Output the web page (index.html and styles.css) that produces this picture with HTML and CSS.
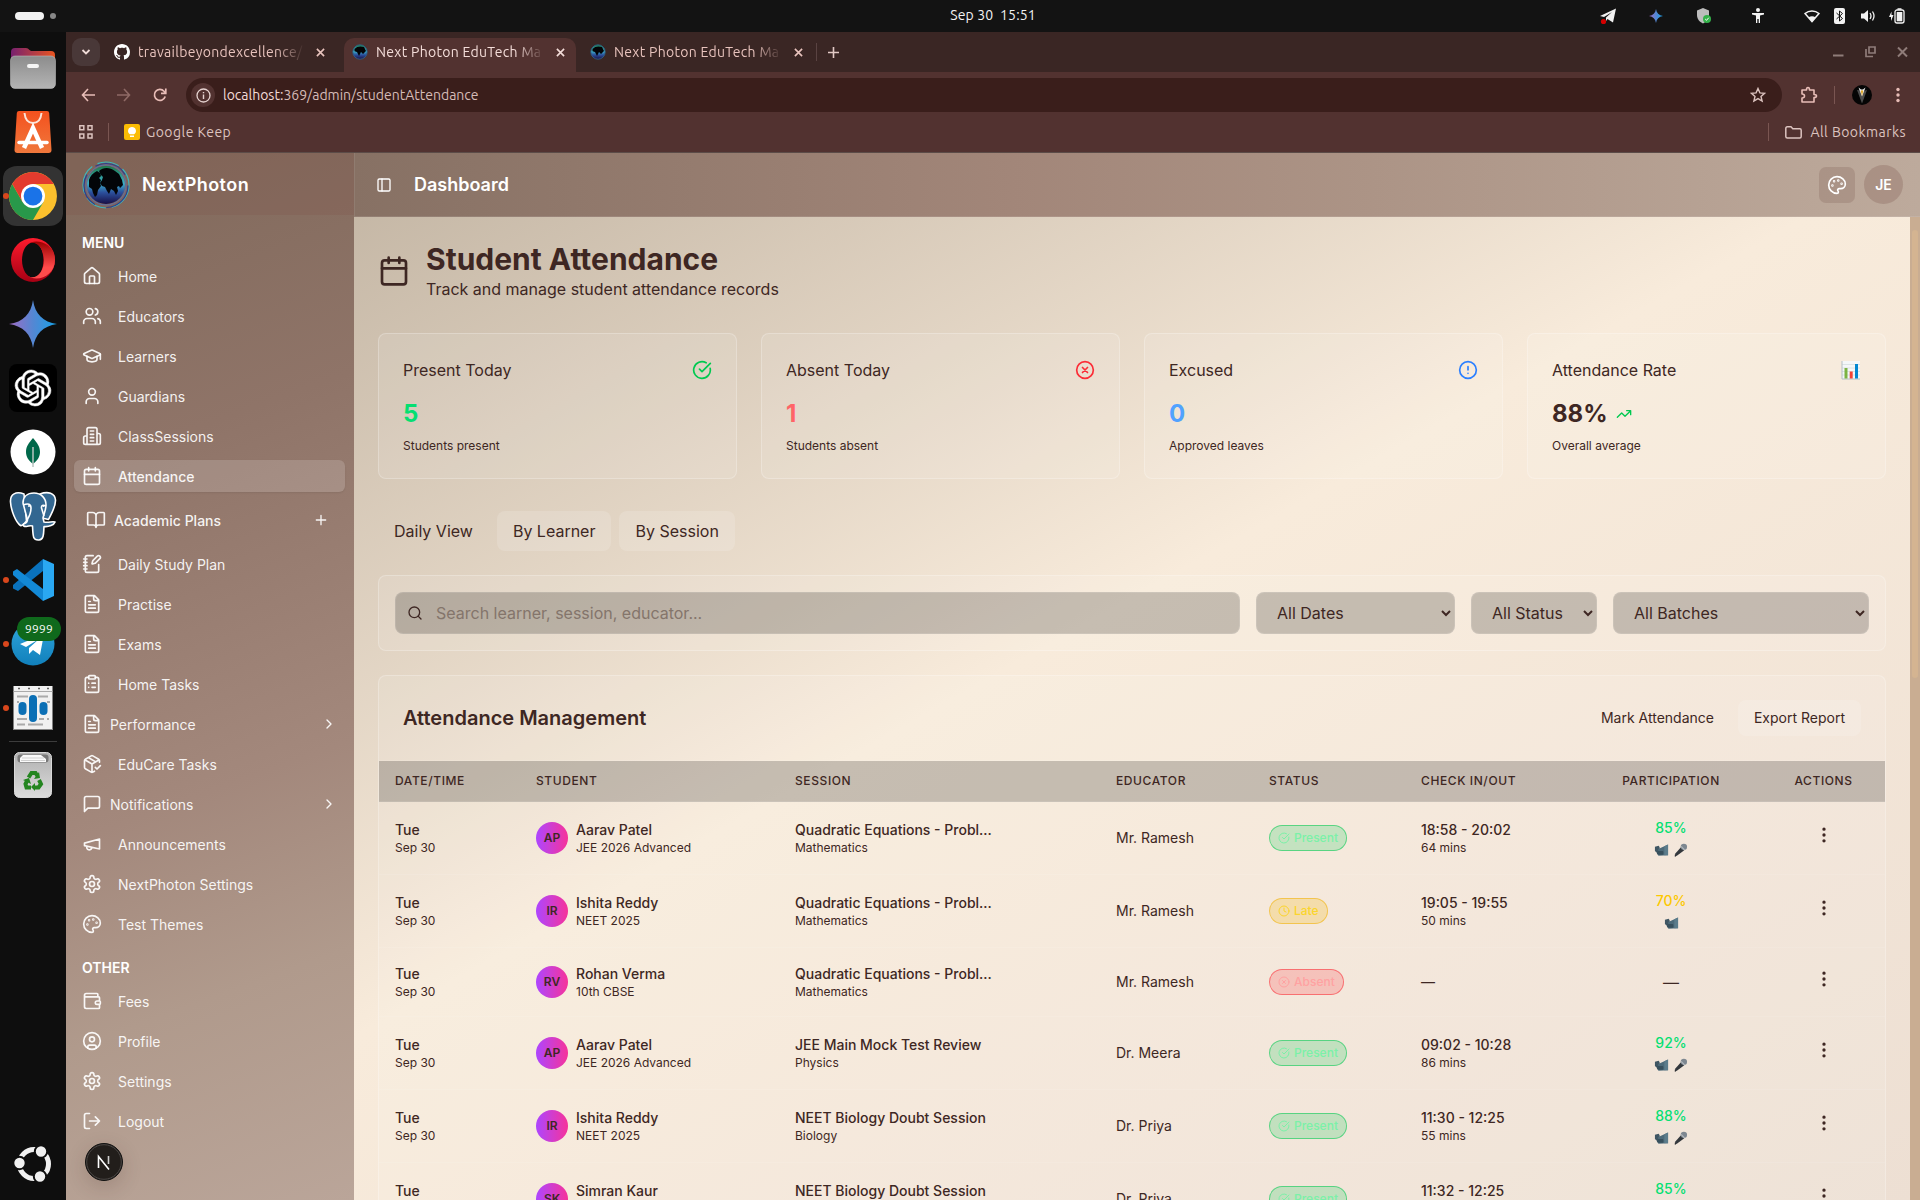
FILE: index.html
```html
<!DOCTYPE html>
<html lang="en">
<head>
<meta charset="utf-8">
<title>Next Photon EduTech</title>
<link rel="stylesheet" href="styles.css">
</head>
<body>
<svg class="defs" aria-hidden="true">
  <defs>
    <linearGradient id="gem" x1="0" x2="1"><stop offset="0" stop-color="#a06bc4"/><stop offset=".5" stop-color="#5487d3"/><stop offset="1" stop-color="#16a2e8"/></linearGradient>
    <linearGradient id="globeFill" x1="0" x2="0" y1="0" y2="1"><stop offset="0" stop-color="#1d7a4c"/><stop offset=".45" stop-color="#3cb0c8"/><stop offset=".7" stop-color="#2b4f9c"/><stop offset="1" stop-color="#190f45"/></linearGradient>
    <linearGradient id="operaA" x1="0" x2="0" y1="0" y2="1"><stop offset="0" stop-color="#ff1b2d"/><stop offset="1" stop-color="#a70014"/></linearGradient>
    <linearGradient id="operaB" x1="0" x2="0" y1="0" y2="1"><stop offset="0" stop-color="#9c0000"/><stop offset=".7" stop-color="#ff4b4b"/></linearGradient>
    <linearGradient id="folderBack" x1="0" x2="1"><stop offset="0" stop-color="#77216f"/><stop offset="1" stop-color="#e95420"/></linearGradient>
    <linearGradient id="greyFade" x1="0" x2="0" y1="0" y2="1"><stop offset="0" stop-color="#8c8c8c"/><stop offset="1" stop-color="#b4b4b4"/></linearGradient>
    <linearGradient id="trashFade" x1="0" x2="0" y1="0" y2="1"><stop offset="0" stop-color="#b0b0b0"/><stop offset="1" stop-color="#dcdcdc"/></linearGradient>
    <linearGradient id="tgFade" x1="0" x2="0" y1="0" y2="1"><stop offset="0" stop-color="#2fa5dd"/><stop offset="1" stop-color="#1180bb"/></linearGradient>
    <linearGradient id="storeFade" x1="0" x2="0" y1="0" y2="1"><stop offset="0" stop-color="#f4511e"/><stop offset="1" stop-color="#f0783c"/></linearGradient>
  </defs>
  <symbol id="i-home" viewBox="0 0 24 24"><path d="M15 21v-8a1 1 0 0 0-1-1h-4a1 1 0 0 0-1 1v8"/><path d="M3 10a2 2 0 0 1 .709-1.528l7-5.999a2 2 0 0 1 2.582 0l7 5.999A2 2 0 0 1 21 10v9a2 2 0 0 1-2 2H5a2 2 0 0 1-2-2z"/></symbol>
  <symbol id="i-users" viewBox="0 0 24 24"><path d="M16 21v-2a4 4 0 0 0-4-4H6a4 4 0 0 0-4 4v2"/><circle cx="9" cy="7" r="4"/><path d="M22 21v-2a4 4 0 0 0-3-3.87M16 3.13a4 4 0 0 1 0 7.75"/></symbol>
  <symbol id="i-cap" viewBox="0 0 24 24"><path d="M21.42 10.922a1 1 0 0 0-.019-1.838L12.83 5.18a2 2 0 0 0-1.66 0L2.6 9.08a1 1 0 0 0 0 1.832l8.57 3.908a2 2 0 0 0 1.66 0z"/><path d="M22 10v6M6 12.5V16a6 3 0 0 0 12 0v-3.5"/></symbol>
  <symbol id="i-user" viewBox="0 0 24 24"><path d="M19 21v-2a4 4 0 0 0-4-4H9a4 4 0 0 0-4 4v2"/><circle cx="12" cy="7" r="4"/></symbol>
  <symbol id="i-building" viewBox="0 0 24 24"><path d="M6 22V4a2 2 0 0 1 2-2h8a2 2 0 0 1 2 2v18ZM6 12H4a2 2 0 0 0-2 2v6a2 2 0 0 0 2 2h2M18 9h2a2 2 0 0 1 2 2v9a2 2 0 0 1-2 2h-2M10 6h4M10 10h4M10 14h4M10 18h4"/></symbol>
  <symbol id="i-calendar" viewBox="0 0 24 24"><path d="M8 2v4M16 2v4M3 10h18"/><rect x="3" y="4" width="18" height="18" rx="2"/></symbol>
  <symbol id="i-book" viewBox="0 0 24 24"><path d="M12 7v14M3 18a1 1 0 0 1-1-1V4a1 1 0 0 1 1-1h5a4 4 0 0 1 4 4 4 4 0 0 1 4-4h5a1 1 0 0 1 1 1v13a1 1 0 0 1-1 1h-6a3 3 0 0 0-3 3 3 3 0 0 0-3-3z"/></symbol>
  <symbol id="i-notebook" viewBox="0 0 24 24"><path d="M13.4 2H6a2 2 0 0 0-2 2v16a2 2 0 0 0 2 2h12a2 2 0 0 0 2-2v-7.4M2 6h4M2 10h4M2 14h4M2 18h4M21.378 5.626a1 1 0 1 0-3.004-3.004l-5.01 5.012a2 2 0 0 0-.506.854l-.837 2.87a.5.5 0 0 0 .62.62l2.87-.837a2 2 0 0 0 .854-.506z"/></symbol>
  <symbol id="i-file" viewBox="0 0 24 24"><path d="M15 2H6a2 2 0 0 0-2 2v16a2 2 0 0 0 2 2h12a2 2 0 0 0 2-2V7ZM14 2v4a2 2 0 0 0 2 2h4M10 9H8M16 13H8M16 17H8"/></symbol>
  <symbol id="i-clipboard" viewBox="0 0 24 24"><rect x="8" y="2" width="8" height="4" rx="1"/><path d="M16 4h2a2 2 0 0 1 2 2v14a2 2 0 0 1-2 2H6a2 2 0 0 1-2-2V6a2 2 0 0 1 2-2h2M12 11h4M12 16h4M8 11h.01M8 16h.01"/></symbol>
  <symbol id="i-package" viewBox="0 0 24 24"><path d="m16 16 2 2 4-4M21 10V8a2 2 0 0 0-1-1.73l-7-4a2 2 0 0 0-2 0l-7 4A2 2 0 0 0 3 8v8a2 2 0 0 0 1 1.73l7 4a2 2 0 0 0 2 0l2-1.14M7.5 4.27l9 5.15M3.29 7 12 12l8.71-5M12 22V12"/></symbol>
  <symbol id="i-message" viewBox="0 0 24 24"><path d="M21 15a2 2 0 0 1-2 2H7l-4 4V5a2 2 0 0 1 2-2h14a2 2 0 0 1 2 2z"/></symbol>
  <symbol id="i-megaphone" viewBox="0 0 24 24"><path d="m3 11 18-5v12L3 14v-3zM11.6 16.8a3 3 0 1 1-5.8-1.6"/></symbol>
  <symbol id="i-settings" viewBox="0 0 24 24"><path d="M12.22 2h-.44a2 2 0 0 0-2 2v.18a2 2 0 0 1-1 1.73l-.43.25a2 2 0 0 1-2 0l-.15-.08a2 2 0 0 0-2.73.73l-.22.38a2 2 0 0 0 .73 2.73l.15.1a2 2 0 0 1 1 1.72v.51a2 2 0 0 1-1 1.74l-.15.09a2 2 0 0 0-.73 2.73l.22.38a2 2 0 0 0 2.73.73l.15-.08a2 2 0 0 1 2 0l.43.25a2 2 0 0 1 1 1.73V20a2 2 0 0 0 2 2h.44a2 2 0 0 0 2-2v-.18a2 2 0 0 1 1-1.73l.43-.25a2 2 0 0 1 2 0l.15.08a2 2 0 0 0 2.73-.73l.22-.39a2 2 0 0 0-.73-2.73l-.15-.08a2 2 0 0 1-1-1.74v-.5a2 2 0 0 1 1-1.74l.15-.09a2 2 0 0 0 .73-2.73l-.22-.38a2 2 0 0 0-2.73-.73l-.15.08a2 2 0 0 1-2 0l-.43-.25a2 2 0 0 1-1-1.73V4a2 2 0 0 0-2-2z"/><circle cx="12" cy="12" r="3"/></symbol>
  <symbol id="i-palette" viewBox="0 0 24 24"><circle cx="13.5" cy="6.5" r=".5"/><circle cx="17.5" cy="10.5" r=".5"/><circle cx="8.5" cy="7.5" r=".5"/><circle cx="6.5" cy="12.5" r=".5"/><path d="M12 2C6.5 2 2 6.5 2 12s4.5 10 10 10c.926 0 1.648-.746 1.648-1.688 0-.437-.18-.835-.437-1.125-.29-.289-.438-.652-.438-1.125a1.64 1.64 0 0 1 1.668-1.668h1.996c3.051 0 5.555-2.503 5.555-5.554C21.965 6.012 17.461 2 12 2z"/></symbol>
  <symbol id="i-wallet" viewBox="0 0 24 24"><path d="M19 7V4a1 1 0 0 0-1-1H5a2 2 0 0 0 0 4h15a1 1 0 0 1 1 1v4h-3a2 2 0 0 0 0 4h3a1 1 0 0 0 1-1v-2a1 1 0 0 0-1-1M3 5v14a2 2 0 0 0 2 2h15a1 1 0 0 0 1-1v-4"/></symbol>
  <symbol id="i-profile" viewBox="0 0 24 24"><circle cx="12" cy="12" r="10"/><circle cx="12" cy="10" r="3"/><path d="M7 20.662V19a2 2 0 0 1 2-2h6a2 2 0 0 1 2 2v1.662"/></symbol>
  <symbol id="i-logout" viewBox="0 0 24 24"><path d="M9 21H5a2 2 0 0 1-2-2V5a2 2 0 0 1 2-2h4M16 17l5-5-5-5M21 12H9"/></symbol>
  <symbol id="i-chevron" viewBox="0 0 24 24"><path d="m9 18 6-6-6-6"/></symbol>
  <symbol id="i-plus" viewBox="0 0 24 24"><path d="M5 12h14M12 5v14"/></symbol>
  <symbol id="i-panel" viewBox="0 0 24 24"><rect x="3" y="3" width="18" height="18" rx="2"/><path d="M9 3v18"/></symbol>
  <symbol id="i-check" viewBox="0 0 24 24"><path d="M21.801 10A10 10 0 1 1 17 3.335M9 11l3 3L22 4"/></symbol>
  <symbol id="i-x" viewBox="0 0 24 24"><circle cx="12" cy="12" r="10"/><path d="m15 9-6 6M9 9l6 6"/></symbol>
  <symbol id="i-alert" viewBox="0 0 24 24"><circle cx="12" cy="12" r="10"/><path d="M12 8v4M12 16h.01"/></symbol>
  <symbol id="i-clock" viewBox="0 0 24 24"><circle cx="12" cy="12" r="10"/><path d="M12 6v6l4 2"/></symbol>
  <symbol id="i-trend" viewBox="0 0 24 24"><path d="m22 7-8.5 8.5-5-5L2 17M16 7h6v6"/></symbol>
  <symbol id="i-search" viewBox="0 0 24 24"><circle cx="11" cy="11" r="8"/><path d="m21 21-4.3-4.3"/></symbol>
  <symbol id="i-dots" viewBox="0 0 24 24"><circle cx="12" cy="12" r="1"/><circle cx="12" cy="5" r="1"/><circle cx="12" cy="19" r="1"/></symbol>
  <symbol id="close" viewBox="0 0 10 10"><path d="M1 1l8 8M9 1l-8 8" fill="none" stroke="currentColor" stroke-width="1.8"/></symbol>
  <symbol id="star4" viewBox="0 0 48 48"><path d="M24 0C26 14 34 22 48 24 34 26 26 34 24 48 22 34 14 26 0 24 14 22 22 14 24 0Z" fill="url(#gem)"/></symbol>
  <symbol id="globe" viewBox="0 0 50 50">
    <circle cx="25" cy="25" r="23" fill="none" stroke="#3fb6b9" stroke-width="1.2" stroke-dasharray="30 6 22 5"/>
    <circle cx="25" cy="25.5" r="22" fill="none" stroke="#2b3f8f" stroke-width="1.2" stroke-dasharray="34 12"/>
    <circle cx="25" cy="25" r="19" fill="url(#globeFill)"/>
    <path d="M8 20c1-4 4-7 8-9l3 2 1 3-2 2 2 2-1 3 1 3-3 4-1 5-2 2-2-4-1-4-3-2zM18 11c4-4 11-4 16 0l4 3 3 6 1 5-3 3-1-2-2 1 1 4-2 4-2-4-3-2-2 5-2-3-2-4-3-1-2-3 2-3 1-3-2-2z" fill="#030508"/>
    <circle cx="25" cy="25" r="20" fill="none" stroke="#5d6fa8" stroke-width="1"/>
  </symbol>
  <symbol id="fav" viewBox="0 0 16 16"><circle cx="8" cy="8" r="7.2" fill="url(#globeFill)" stroke="#2e5f86" stroke-width=".9"/><path d="M2.5 5C5 2 9 2 12 3l2 4-3 3-2-2-2 4-2-4-2.500-.8z" fill="#020407"/></symbol>
  <symbol id="cam" viewBox="0 0 16 16"><path d="M1 4.500 5 3.500l1 1.500v2.500l4-1V11c0 1-.5 1.800-1.500 1.800H4.500C3.600 12.800 3 12 3 11l-2-2z" fill="#3f5663"/><path d="M4.500 7 15 2v11.500L4.500 14z" fill="#4c6a79"/><path d="M11 3.900 15 2v11.500l-4 .2z" fill="#5b7c8b"/><rect x="3.500" y="9" width="6.500" height="4" rx="1" fill="#37505d"/></symbol>
  <symbol id="mic" viewBox="0 0 16 16"><path d="M8.500 5 12 8.200 3.800 14.500 1.800 12.600z" fill="#33383d"/><path d="M2 14.800 3.200 13.600" stroke="#23272b" stroke-width="1.500"/><circle cx="11.600" cy="4.600" r="3.400" fill="#7d8790"/><path d="M8.700 4.200 12.300 8" stroke="#b3b9be" stroke-width="1.200"/></symbol>
</svg>

<div class="topbar">
  <div class="activities"><i class="pill"></i><i class="dot"></i></div>
  <div class="clock">Sep 30&nbsp; 15:51</div>
  <div class="tray">
    <svg width="18" height="18" viewBox="0 0 18 18"><path d="M1 9 17 1.500 14 15.500 8.500 12 7 14V10.500L13 5 5 10z" fill="#f2f2f2"/><circle cx="4.500" cy="14.500" r="2.600" fill="#d40000"/></svg>
    <svg class="t2" width="14" height="14"><use href="#star4"/></svg>
    <svg class="t3" width="18" height="18" viewBox="0 0 18 18"><path d="M8 1 14 3.500V8c0 4-2.500 7-6 8.500C4.500 15 2 12 2 8V3.500z" fill="#bdbdbd"/><circle cx="12" cy="12" r="4" fill="#34b24a"/><path d="m10.200 12 1.300 1.300 2.300-2.600" stroke="#fff" fill="none"/></svg>
    <svg class="t4" width="14" height="16" viewBox="0 0 14 16"><circle cx="7" cy="2" r="2" fill="#f2f2f2"/><path d="M1 5h12v1.600L9 7.500V15H7.700v-4H6.300v4H5V7.500L1 6.600z" fill="#f2f2f2"/></svg>
    <svg class="t5" width="16" height="14" viewBox="0 0 16 14"><path d="M1 4.500C5 1 11 1 15 4.500L8 12.500z" fill="none" stroke="#f2f2f2" stroke-width="1.500"/><path d="M4.500 8.200q3.500-2 7 0L8 13z" fill="#f2f2f2"/></svg>
    <svg class="t6" width="11" height="16" viewBox="0 0 11 16"><rect width="11" height="16" rx="2" fill="#f2f2f2"/><path d="m2.500 5 6 5.500L5.500 13V3l3 2.500-6 5.500" fill="none" stroke="#131313"/></svg>
    <svg class="t7" width="16" height="16" viewBox="0 0 16 16"><path d="M1 5.500h3L8 2v12L4 10.500H1z" fill="#f2f2f2"/><path d="M10 5q2 3 0 6M12.500 3.500q3 4.500 0 9" fill="none" stroke="#f2f2f2" stroke-width="1.300"/></svg>
    <svg class="t8" width="17" height="16" viewBox="0 0 17 16"><path d="M3.500 3.500 1 9h2v4l2.500-6H3.500z" fill="#f2f2f2"/><rect x="7" y="2" width="9" height="13" rx="2" fill="none" stroke="#f2f2f2" stroke-width="1.300"/><rect x="8.700" y="4" width="5.600" height="9.300" fill="#f2f2f2"/><path d="M9.500 1h4" stroke="#f2f2f2" stroke-width="1.500"/></svg>
  </div>
</div>

<div class="desktop">
  <div class="dock">
    <div class="app"><svg width="46" height="42" viewBox="0 0 46 42"><path d="M1 5q0-4 4-4h11q2 0 3.500 2L21 4h20q4 0 4 4v12H1z" fill="url(#folderBack)"/><rect x=".5" y="9" width="45" height="32.500" rx="4.500" fill="url(#greyFade)" stroke="#c8c8c8" stroke-opacity=".5"/><rect x="17" y="17" width="12" height="4" rx="2" fill="#f5f5f5"/></svg></div>
    <div class="app"><svg width="38" height="44" viewBox="0 0 38 44"><path d="M5 1h28q2 0 2.200 2L37.500 40q0 3-3 3h-31q-3 0-3-3L2.800 3Q3 1 5 1z" fill="url(#storeFade)"/><path d="M10.500 3q1 10 8.500 10T27.500 3" fill="none" stroke="#fbe4da" stroke-width="2"/><path d="M10 38 19 18l9 20" fill="none" stroke="#fff" stroke-width="4.500"/><path d="M5 32.500h28" stroke="#fff" stroke-width="3.500" stroke-linecap="round"/></svg></div>
    <div class="app run sel"><svg width="50" height="50" viewBox="0 0 48 48"><circle cx="24" cy="24" r="23" fill="#fbc02d"/><path d="M24 24 4.100 12.500A23 23 0 0 1 43.900 12.500H24z" fill="#e33b2e"/><path d="M4.100 12.500A23 23 0 0 0 24 47L34 29.700 24 24 14 29.700z" fill="#28984a"/><path d="M4.100 12.500 14 29.700 24 13z" fill="#e33b2e"/><circle cx="24" cy="24" r="11.500" fill="#fff"/><circle cx="24" cy="24" r="9" fill="#1a73e8"/></svg></div>
    <div class="app"><svg width="44" height="44" viewBox="0 0 44 44"><path fill-rule="evenodd" d="M22 0a22 22 0 1 0 0 44 22 22 0 0 0 0-44zm0 4.500c6 0 10.500 7.800 10.500 17.500S28 39.500 22 39.500 11 31.700 11 22 16 4.500 22 4.500z" fill="url(#operaA)"/><path d="M16 6.500C26 -1 44 6 44 22S26 45 16 37.500C24 43 33 35 33 22S24 1 16 6.500z" fill="url(#operaB)"/></svg></div>
    <div class="app"><svg width="48" height="48"><use href="#star4"/></svg></div>
    <div class="app"><svg width="48" height="48" viewBox="0 0 48 48"><rect width="48" height="48" rx="8" fill="#000"/><path transform="translate(6 6) scale(1.5)" fill="#fff" stroke="#fff" stroke-width=".35" d="M22.2819 9.8211a5.9847 5.9847 0 0 0-.5157-4.9108 6.0462 6.0462 0 0 0-6.5098-2.9A6.0651 6.0651 0 0 0 4.9807 4.1818a5.9847 5.9847 0 0 0-3.9977 2.9 6.0462 6.0462 0 0 0 .7427 7.0966 5.98 5.98 0 0 0 .511 4.9107 6.051 6.051 0 0 0 6.5146 2.9001A5.9847 5.9847 0 0 0 13.2599 24a6.0557 6.0557 0 0 0 5.7718-4.2058 5.9894 5.9894 0 0 0 3.9977-2.9001 6.0557 6.0557 0 0 0-.7475-7.0729zm-9.022 12.6081a4.4755 4.4755 0 0 1-2.8764-1.0408l.1419-.0804 4.7783-2.7582a.7948.7948 0 0 0 .3927-.6813v-6.7369l2.02 1.1686a.071.071 0 0 1 .038.052v5.5826a4.504 4.504 0 0 1-4.4945 4.4944zm-9.6607-4.1254a4.4708 4.4708 0 0 1-.5346-3.0137l.142.0852 4.783 2.7582a.7712.7712 0 0 0 .7806 0l5.8428-3.3685v2.3324a.0804.0804 0 0 1-.0332.0615L9.74 19.9502a4.4992 4.4992 0 0 1-6.1408-1.6464zM2.3408 7.8956a4.485 4.485 0 0 1 2.3655-1.9728V11.6a.7664.7664 0 0 0 .3879.6765l5.8144 3.3543-2.0201 1.1685a.0757.0757 0 0 1-.071 0l-4.8303-2.7865A4.504 4.504 0 0 1 2.3408 7.872zm16.5963 3.8558L13.1038 8.364 15.1192 7.2a.0757.0757 0 0 1 .071 0l4.8303 2.7913a4.4944 4.4944 0 0 1-.6765 8.1042v-5.6772a.79.79 0 0 0-.407-.667zm2.0107-3.0231l-.142-.0852-4.7735-2.7818a.7759.7759 0 0 0-.7854 0L9.409 9.2297V6.8974a.0662.0662 0 0 1 .0284-.0615l4.8303-2.7866a4.4992 4.4992 0 0 1 6.6802 4.66zM8.3065 12.863l-2.02-1.1638a.0804.0804 0 0 1-.038-.0567V6.0742a4.4992 4.4992 0 0 1 7.3757-3.4537l-.142.0805L8.704 5.459a.7948.7948 0 0 0-.3927.6813zm1.0976-2.3654l2.602-1.4998 2.6069 1.4998v2.9994l-2.5974 1.4997-2.6067-1.4997Z"/></svg></div>
    <div class="app"><svg width="46" height="46" viewBox="0 0 46 46"><circle cx="23" cy="23" r="22.500" fill="#fff"/><path d="M23 9c4 5 7 8 7 14 0 5-3 9-6.500 11.500h-1C19 32 16 28 16 23c0-6 3-9 7-14z" fill="#00684a"/><path d="M23 18v20" stroke="#b8c4c2" stroke-width="1.500"/></svg></div>
    <div class="app"><svg width="48" height="50" viewBox="0 0 48 50"><g fill="#336791" stroke="#fff" stroke-width="1.600" stroke-linejoin="round"><path d="M15 3C7 0 1 3 1.500 11c.5 8 5 20 10 23.500 2 1 4-2 6-4.500L16 14z"/><path d="M31 3c8-3 15-1 15.500 6 .3 7-4 13-7 19.500L33 27z"/><path d="M14 12C14 6 18 2 25 2s12 5 12 12c0 5-2 8-3 13l1 4c5 1 8-1 11 0-1 3-6 5-11 4.500-.5 5 .5 13-5 13.500-6 .5-6-3-6.500-14-2.500-1-4 .5-6 .5-3 0-4-1-3-2.500 4-2 3-1 4-4z"/><path d="M14 14q8-3 8 3t-4 12M37 15q-5-2-4.500 2l2.500 8" fill="none"/></g><circle cx="20" cy="15" r="1" fill="#fff"/><circle cx="34.500" cy="15" r="1" fill="#fff"/></svg></div>
    <div class="app run"><svg width="42" height="42" viewBox="0 0 42 42"><path d="m31 0 0 12L6 32l-5-2.500V26z" fill="#0a72bd"/><path d="M1 12.500 5 10l26 20v12L1 16z" fill="#1389d6"/><path d="M31 0 42 5v32l-11 5z" fill="#2aa8f2"/></svg></div>
    <div class="app run"><svg width="44" height="44" viewBox="0 0 44 44"><circle cx="22" cy="22" r="21.500" fill="url(#tgFade)"/><path d="m9 22 24-10-4 21-7-5-4 4v-6l10-9-13 8z" fill="#fff"/></svg><span class="count">9999</span></div>
    <div class="app run"><svg width="40" height="44" viewBox="0 0 40 44"><path d="M.5 0h39v44H.5z" fill="#f1f1f1"/><path d="M.5 5.500h39" stroke="#aaa"/><path d="M5 2.500h2M15 2.500h2M25 2.500h2M34 2.500h2" stroke="#666" stroke-width="1.500"/><path d="M4 10.500h11M25 10.500h10M4 16h2M34 16h3M4 33h10M26 33h5M34 33h2M4 38.500h8M15 38.500h15" stroke="#aaa" stroke-width="2"/><rect x="5.500" y="16" width="8" height="13" rx="4" fill="#0b6fb5"/><rect x="16" y="9" width="8" height="27" rx="4" fill="#0b6fb5"/><rect x="26.500" y="16" width="8" height="13" rx="4" fill="#0b6fb5"/><path d="M.5 43.500h39" stroke="#888"/></svg></div>
    <i class="rule"></i>
    <div class="app"><svg width="38" height="46" viewBox="0 0 38 46"><rect x=".5" y=".5" width="37" height="45" rx="5" fill="url(#trashFade)" stroke="#d8d8d8"/><rect x="3.500" y="2.500" width="31" height="8" rx="3" fill="#777"/><path d="M6 10V6l3-3h18l5 4v3z" fill="#fafafa"/><path d="M8 6h22M7 8.500h24" stroke="#bbb" stroke-width=".7"/><g fill="none" stroke="#23851f" stroke-width="4"><path d="m14.500 25.500 3-4.500h4l2 3"/><path d="m25 28 2 4-2.500 3.500h-4"/><path d="M17 35.500h-4.500L11.500 32l2-4"/></g><path d="m20 27 6-1-1-6zM21 31v8l-4-4zM9 28l6-2 2 6z" fill="#23851f"/></svg></div>
    <div class="app start"><svg width="38" height="38" viewBox="0 0 38 38"><circle cx="20" cy="19" r="14.500" fill="none" stroke="#f0f0f0" stroke-width="5"/><g fill="#f0f0f0" stroke="#0e0e0e" stroke-width="2"><circle cx="5.500" cy="18" r="6.200"/><circle cx="27" cy="6.500" r="6.200"/><circle cx="26" cy="31.500" r="6.200"/></g></svg></div>
  </div>

  <div class="browser">
    <div class="tabs">
      <div class="tabsearch"><svg width="10" height="8" viewBox="0 0 10 8"><path d="m1.500 2 3.500 3.500L8.500 2" fill="none" stroke="#f0dcd8" stroke-width="1.800"/></svg></div>
      <div class="tab first"><svg width="16" height="16" viewBox="0 0 16 16"><path fill="#fff" d="M8 0C3.580 0 0 3.580 0 8c0 3.540 2.290 6.530 5.470 7.590.4.070.55-.17.55-.38 0-.19-.01-.82-.01-1.490-2.010.37-2.530-.49-2.690-.94-.09-.23-.48-.94-.82-1.130-.28-.15-.68-.52-.01-.53.63-.01 1.080.58 1.230.82.72 1.210 1.870.87 2.330.66.070-.52.28-.87.51-1.070-1.780-.2-3.640-.89-3.640-3.950 0-.87.31-1.590.82-2.150-.08-.2-.36-1.020.08-2.120 0 0 .67-.21 2.200.82.64-.18 1.320-.27 2-.27s1.360.09 2 .27c1.530-1.040 2.200-.82 2.200-.82.44 1.100.16 1.920.08 2.120.51.56.82 1.270.82 2.150 0 3.070-1.870 3.750-3.650 3.950.29.25.54.73.54 1.480 0 1.070-.01 1.930-.01 2.200 0 .21.15.46.55.38A8.010 8.010 0 0 0 16 8c0-4.420-3.580-8-8-8z"/></svg><span class="label l1">travailbeyondexcellence/</span><svg class="cl" width="9" height="9"><use href="#close"/></svg></div>
      <div class="tab active"><svg width="16" height="16"><use href="#fav"/></svg><span class="label">Next Photon EduTech Ma</span><svg class="cl" width="9" height="9"><use href="#close"/></svg></div>
      <div class="tab last"><svg width="16" height="16"><use href="#fav"/></svg><span class="label">Next Photon EduTech Ma</span><svg class="cl" width="9" height="9"><use href="#close"/></svg></div>
      <i class="tabsep"></i>
      <svg class="newtab" width="11" height="11" viewBox="0 0 11 11"><path d="M0 5.500h11M5.500 0v11" stroke="#e2c9c5" stroke-width="1.600"/></svg>
      <div class="winbtns">
        <svg width="11" height="12" viewBox="0 0 11 12"><path d="M0 9.500h10.500" stroke="#8f7c79" stroke-width="2"/></svg>
        <svg width="11" height="12" viewBox="0 0 11 12"><path d="M4 1h6v6H4zM1 3v7.500h7" fill="none" stroke="#8f7c79" stroke-width="1.700"/></svg>
        <svg width="11" height="12" viewBox="0 0 11 12"><path d="m1 1.500 9 9m0-9-9 9" stroke="#8f7c79" stroke-width="2"/></svg>
      </div>
    </div>
    <div class="toolbar">
      <svg class="nav" width="14" height="14" viewBox="0 0 14 14"><path d="M14 7H2M7 1 1.500 7 7 13" fill="none" stroke="#e8bdb7" stroke-width="1.600"/></svg>
      <svg class="nav" width="14" height="14" viewBox="0 0 14 14"><path d="M0 7h12M7 1l5.500 6L7 13" fill="none" stroke="#8f6a66" stroke-width="1.600"/></svg>
      <svg class="nav" width="14" height="14" viewBox="0 0 14 14"><path d="M12.200 8.500A5.500 5.500 0 1 1 11 3.200L12.500 5M12.800.5V5.300H8" fill="none" stroke="#e8bdb7" stroke-width="1.700"/></svg>
      <div class="url">
        <span class="info"><svg width="15" height="15" viewBox="0 0 15 15"><circle cx="7.500" cy="7.500" r="6.500" fill="none" stroke="#e6d3d0" stroke-width="1.300"/><path d="M7.500 6.500V11M7.500 4v1.300" stroke="#e6d3d0" stroke-width="1.400"/></svg></span>
        <span class="addr"><b>localhost:</b>369/admin/studentAttendance</span>
        <svg class="fav-star" width="16" height="16" viewBox="0 0 16 16"><path d="m8 1.500 1.900 4.400 4.700.4-3.600 3.100 1.100 4.600L8 11.600 3.900 14 5 9.400 1.400 6.300l4.700-.4z" fill="none" stroke="#dcc3bf" stroke-width="1.400"/></svg>
      </div>
      <svg class="ext" width="18" height="18" viewBox="0 0 18 18"><path d="M2 4h4.500q0-2.500 1.500-2.500T9.500 4H14v4.500q2.500 0 2.500 1.500T14 11.500V16H2v-4q2.500 0 2.500-2T2 8z" fill="none" stroke="#e8bdb7" stroke-width="1.600" stroke-linejoin="round"/></svg>
      <i class="vsep s1"></i>
      <svg class="acct" width="20" height="20" viewBox="0 0 20 20"><circle cx="10" cy="10" r="10" fill="#050505"/><path d="M5 5 10 18.500 15 5l-3 1z" fill="#4c4c4c"/><path d="M6.500 2.500 10 11.500l3.500-9L11 4.500H9z" fill="#f2f2f2"/><path d="m8.700 6 1.300 5L11.300 6 10 5z" fill="#e0a92e"/></svg>
      <svg class="kebab" width="4" height="16" viewBox="0 0 4 16"><g fill="#e8bdb7"><circle cx="2" cy="2.500" r="1.700"/><circle cx="2" cy="8" r="1.700"/><circle cx="2" cy="13.500" r="1.700"/></g></svg>
    </div>
    <div class="bookmarks">
      <svg width="14" height="14" viewBox="0 0 14 14"><path d="M.8.8h4v4h-4zM9 .8h4v4H9zM.8 9h4v4h-4zM9 9h4v4H9z" fill="none" stroke="#dcc3bf" stroke-width="1.500"/></svg>
      <i class="vsep s2"></i>
      <svg width="16" height="16" viewBox="0 0 16 16"><rect width="16" height="16" rx="2" fill="#fbbc04"/><path d="M8 3a4 4 0 0 0-2.200 7.300h4.400A4 4 0 0 0 8 3zM6 11.500h4v1.500H6z" fill="#fff"/></svg>
      <span class="bm">Google Keep</span>
      <i class="vsep s3"></i>
      <svg width="17" height="13" viewBox="0 0 17 13"><path d="M.8 2.500Q.8.8 2.400.8H6l1.800 1.900h7q1.400 0 1.400 1.500v6.300q0 1.500-1.400 1.500H2.400Q.8 12 .8 10.500z" fill="none" stroke="#dcc3bf" stroke-width="1.500"/></svg>
      <span class="bm bm2">All Bookmarks</span>
    </div>

    <div class="page">
      <aside class="sidebar">
        <div class="brand"><svg width="50" height="50"><use href="#globe"/></svg><span>NextPhoton</span></div>
        <div class="menu">
          <div class="group">MENU</div>
          <a class="item"><svg><use href="#i-home"/></svg>Home</a>
          <a class="item"><svg><use href="#i-users"/></svg>Educators</a>
          <a class="item"><svg><use href="#i-cap"/></svg>Learners</a>
          <a class="item"><svg><use href="#i-user"/></svg>Guardians</a>
          <a class="item"><svg><use href="#i-building"/></svg>ClassSessions</a>
          <a class="item on"><svg><use href="#i-calendar"/></svg>Attendance</a>
          <a class="item plan"><svg><use href="#i-book"/></svg>Academic Plans<svg class="end"><use href="#i-plus"/></svg></a>
          <a class="item"><svg><use href="#i-notebook"/></svg>Daily Study Plan</a>
          <a class="item"><svg><use href="#i-file"/></svg>Practise</a>
          <a class="item"><svg><use href="#i-file"/></svg>Exams</a>
          <a class="item"><svg><use href="#i-clipboard"/></svg>Home Tasks</a>
          <a class="item sub"><svg><use href="#i-file"/></svg>Performance<svg class="end"><use href="#i-chevron"/></svg></a>
          <a class="item"><svg><use href="#i-package"/></svg>EduCare Tasks</a>
          <a class="item sub"><svg><use href="#i-message"/></svg>Notifications<svg class="end"><use href="#i-chevron"/></svg></a>
          <a class="item"><svg><use href="#i-megaphone"/></svg>Announcements</a>
          <a class="item"><svg><use href="#i-settings"/></svg>NextPhoton Settings</a>
          <a class="item"><svg><use href="#i-palette"/></svg>Test Themes</a>
          <div class="group other">OTHER</div>
          <a class="item"><svg><use href="#i-wallet"/></svg>Fees</a>
          <a class="item"><svg><use href="#i-profile"/></svg>Profile</a>
          <a class="item"><svg><use href="#i-settings"/></svg>Settings</a>
          <a class="item"><svg><use href="#i-logout"/></svg>Logout</a>
        </div>
        <div class="devtool"><svg width="38" height="38" viewBox="0 0 38 38"><circle cx="19" cy="19" r="18.500" fill="#221e1b" stroke="#111"/><circle cx="19" cy="19" r="17.300" fill="none" stroke="#4a4644"/><path d="M13.500 25V13.500L24 26.500" fill="none" stroke="#fff" stroke-width="1.600"/><path d="M23.500 13v8" stroke="#cfcfcf" stroke-width="1.600"/></svg></div>
      </aside>

      <div class="content">
        <header class="head">
          <svg class="ic panel"><use href="#i-panel"/></svg>
          <span class="title">Dashboard</span>
          <span class="theme"><svg class="ic"><use href="#i-palette"/></svg></span>
          <span class="me">JE</span>
        </header>
        <div class="scroller">
          <main>
            <div class="heading">
              <svg class="ic"><use href="#i-calendar"/></svg>
              <div><h1>Student Attendance</h1><p>Track and manage student attendance records</p></div>
            </div>

            <div class="stats">
              <div class="card stat"><div class="row">Present Today<svg class="ic green"><use href="#i-check"/></svg></div><div class="num n-green">5</div><small>Students present</small></div>
              <div class="card stat"><div class="row">Absent Today<svg class="ic red"><use href="#i-x"/></svg></div><div class="num n-red">1</div><small>Students absent</small></div>
              <div class="card stat"><div class="row">Excused<svg class="ic blue"><use href="#i-alert"/></svg></div><div class="num n-blue">0</div><small>Approved leaves</small></div>
              <div class="card stat"><div class="row">Attendance Rate<svg class="chart" width="20" height="20" viewBox="0 0 20 20"><path d="M1 1h18v18H1z" fill="#f4f7f8"/><path d="M1 4.500h18M1 8h18M1 11.500h18M1 15h18" stroke="#d5dde0" stroke-width=".8"/><path d="M1 1v18h18" fill="none" stroke="#b5c0c5"/><path d="M3.500 8h3v10.500h-3z" fill="#7cb342"/><path d="M8.700 11.500h3v7h-3z" fill="#f44336"/><path d="M14 4h3v14.500h-3z" fill="#0288d1"/></svg></div><div class="num">88%<svg class="ic green"><use href="#i-trend"/></svg></div><small>Overall average</small></div>
            </div>

            <div class="views"><span>Daily View</span><span class="soft">By Learner</span><span class="soft">By Session</span></div>

            <div class="card filters">
              <div class="search"><svg class="ic"><use href="#i-search"/></svg><input placeholder="Search learner, session, educator..."></div>
              <select class="w-dates"><option>All Dates</option></select>
              <select class="w-status"><option>All Status</option></select>
              <select class="w-batch"><option>All Batches</option></select>
            </div>

            <section class="card records">
              <div class="rechead"><h2>Attendance Management</h2><span class="btn">Mark Attendance</span><span class="btn soft">Export Report</span></div>
              <div class="tr th"><span>DATE/TIME</span><span>STUDENT</span><span>SESSION</span><span>EDUCATOR</span><span>STATUS</span><span>CHECK IN/OUT</span><span class="mid">PARTICIPATION</span><span class="mid">ACTIONS</span></div>

              <div class="tr">
                <div><b>Tue</b><small>Sep 30</small></div>
                <div class="who"><i>AP</i><div><b>Aarav Patel</b><small>JEE 2026 Advanced</small></div></div>
                <div><b>Quadratic Equations - Probl...</b><small>Mathematics</small></div>
                <div>Mr. Ramesh</div>
                <div><span class="badge present"><svg class="ic"><use href="#i-check"/></svg>Present</span></div>
                <div><b>18:58 - 20:02</b><small>64 mins</small></div>
                <div class="mid part"><b class="g">85%</b><span><svg><use href="#cam"/></svg><svg><use href="#mic"/></svg></span></div>
                <div class="mid act"><svg class="ic"><use href="#i-dots"/></svg></div>
              </div>
              <div class="tr">
                <div><b>Tue</b><small>Sep 30</small></div>
                <div class="who"><i>IR</i><div><b>Ishita Reddy</b><small>NEET 2025</small></div></div>
                <div><b>Quadratic Equations - Probl...</b><small>Mathematics</small></div>
                <div>Mr. Ramesh</div>
                <div><span class="badge late"><svg class="ic"><use href="#i-clock"/></svg>Late</span></div>
                <div><b>19:05 - 19:55</b><small>50 mins</small></div>
                <div class="mid part"><b class="y">70%</b><span><svg><use href="#cam"/></svg></span></div>
                <div class="mid act"><svg class="ic"><use href="#i-dots"/></svg></div>
              </div>
              <div class="tr">
                <div><b>Tue</b><small>Sep 30</small></div>
                <div class="who"><i>RV</i><div><b>Rohan Verma</b><small>10th CBSE</small></div></div>
                <div><b>Quadratic Equations - Probl...</b><small>Mathematics</small></div>
                <div>Mr. Ramesh</div>
                <div><span class="badge absent"><svg class="ic"><use href="#i-x"/></svg>Absent</span></div>
                <div>—</div>
                <div class="mid dash">—</div>
                <div class="mid act"><svg class="ic"><use href="#i-dots"/></svg></div>
              </div>
              <div class="tr">
                <div><b>Tue</b><small>Sep 30</small></div>
                <div class="who"><i>AP</i><div><b>Aarav Patel</b><small>JEE 2026 Advanced</small></div></div>
                <div><b>JEE Main Mock Test Review</b><small>Physics</small></div>
                <div>Dr. Meera</div>
                <div><span class="badge present"><svg class="ic"><use href="#i-check"/></svg>Present</span></div>
                <div><b>09:02 - 10:28</b><small>86 mins</small></div>
                <div class="mid part"><b class="g">92%</b><span><svg><use href="#cam"/></svg><svg><use href="#mic"/></svg></span></div>
                <div class="mid act"><svg class="ic"><use href="#i-dots"/></svg></div>
              </div>
              <div class="tr">
                <div><b>Tue</b><small>Sep 30</small></div>
                <div class="who"><i>IR</i><div><b>Ishita Reddy</b><small>NEET 2025</small></div></div>
                <div><b>NEET Biology Doubt Session</b><small>Biology</small></div>
                <div>Dr. Priya</div>
                <div><span class="badge present"><svg class="ic"><use href="#i-check"/></svg>Present</span></div>
                <div><b>11:30 - 12:25</b><small>55 mins</small></div>
                <div class="mid part"><b class="g">88%</b><span><svg><use href="#cam"/></svg><svg><use href="#mic"/></svg></span></div>
                <div class="mid act"><svg class="ic"><use href="#i-dots"/></svg></div>
              </div>
              <div class="tr">
                <div><b>Tue</b><small>&nbsp;</small></div>
                <div class="who"><i>SK</i><div><b>Simran Kaur</b><small>&nbsp;</small></div></div>
                <div><b>NEET Biology Doubt Session</b><small>&nbsp;</small></div>
                <div>Dr. Priya</div>
                <div><span class="badge present"><svg class="ic"><use href="#i-check"/></svg>Present</span></div>
                <div><b>11:32 - 12:25</b><small>&nbsp;</small></div>
                <div class="mid part"><b class="g">85%</b><span><svg><use href="#cam"/></svg><svg><use href="#mic"/></svg></span></div>
                <div class="mid act"><svg class="ic"><use href="#i-dots"/></svg></div>
              </div>
            </section>
          </main>
          <div class="track"><i></i></div>
        </div>
      </div>
    </div>
  </div>
</div>
</body>
</html>
```
FILE: styles.css
```css
* { box-sizing: border-box; }
body { margin: 0; width: 1920px; height: 1200px; overflow: hidden; background: #0e0e0e; font-family: Inter, "Liberation Sans", sans-serif; display: flex; flex-direction: column; }
svg { flex: none; display: block; }
i { font-style: normal; }
.defs { position: absolute; width: 0; height: 0; }
.topbar, .browser > .tabs, .toolbar, .bookmarks, .count { font-family: Ubuntu, "Noto Sans", sans-serif; }

/* system bar */
.topbar { height: 32px; flex: none; background: #131313; color: #f2f2f2; display: grid; grid-template-columns: 600px 1fr 600px; align-items: center; }
.activities { display: flex; align-items: center; gap: 6px; padding-left: 15px; }
.pill { width: 29px; height: 8px; border-radius: 4px; background: #f2f2f2; }
.dot { width: 6px; height: 6px; border-radius: 3px; background: #888; }
.clock { text-align: center; font-size: 14px; letter-spacing: .15px; padding: 0 0 2px 66px; }
.tray { display: flex; align-items: center; justify-content: flex-end; padding-right: 15px; }
.t2 { margin-left: 32px; }
.t3 { margin-left: 32px; }
.t4 { margin-left: 38px; }
.t5 { margin-left: 39px; }
.t6 { margin-left: 14px; }
.t7 { margin-left: 15px; }
.t8 { margin-left: 12px; }

.desktop { flex: 1; display: flex; min-height: 0; }

/* dock */
.dock { width: 66px; flex: none; background: #0e0e0e; display: flex; flex-direction: column; align-items: center; padding-top: 4px; }
.app { position: relative; width: 60px; height: 64px; flex: none; display: flex; align-items: center; justify-content: center; }
.sel { background: #333; background-clip: padding-box; border: solid transparent; border-width: 2px 0; border-radius: 14px; }
.run::before { content: ""; position: absolute; left: 0; top: 50%; width: 6px; height: 6px; margin-top: -3px; border-radius: 3px; background: #d9471c; }
.count { position: absolute; left: 14px; top: 5px; width: 44px; height: 24px; border-radius: 12px; background: #0f691c; color: #fff; font-size: 12px; letter-spacing: .2px; line-height: 23px; text-align: center; }
.rule { width: 48px; height: 1px; background: #3c3c3c; margin-top: 1px; }
.rule + .app { margin-top: 1px; }
.start { margin-top: auto; margin-bottom: 4px; }

/* browser chrome */
.browser { flex: 1; min-width: 0; display: flex; flex-direction: column; background: #523230; color: #e8c3bd; font-size: 14px; }
.tabs { height: 40px; flex: none; background: #3a2624; display: flex; align-items: center; padding-left: 6px; }
.tabsearch { width: 28px; height: 28px; border-radius: 9px; background: #493838; display: flex; align-items: center; justify-content: center; }
.tab { display: flex; align-items: center; height: 34px; margin-top: 6px; padding-bottom: 6px; }
.label { width: 170px; margin-left: 8px; overflow: hidden; white-space: nowrap; letter-spacing: .3px; -webkit-mask-image: linear-gradient(90deg, #000 82%, transparent 99%); mask-image: linear-gradient(90deg, #000 82%, transparent 99%); }
.l1 { width: 168px; margin-left: 8px; }
.tab .cl { margin-left: 10px; }
.first { margin-left: 14px; width: 230px; }
.active { width: 232px; padding-left: 8px; background: #523230; border-radius: 10px 10px 0 0; color: #f3dcd8; }
.last { margin-left: 14px; width: 226px; }
.tabsep { width: 1px; height: 18px; background: #5a4342; }
.newtab { margin-left: 11px; }
.winbtns { margin-left: auto; display: flex; gap: 21px; padding-right: 12px; }
.toolbar { height: 46px; flex: none; display: flex; align-items: center; padding-left: 15px; }
.nav { margin-right: 22px; }
.url { width: 1596px; height: 34px; margin-left: -3px; border-radius: 17px; background: #3a1e1b; display: flex; align-items: center; padding: 0 16px 0 5px; }
.info { width: 24px; height: 24px; border-radius: 12px; background: #523230; display: flex; align-items: center; justify-content: center; }
.addr { margin-left: 8px; color: #d6bcb8; }
.addr b { font-weight: 400; color: #f3dcd8; }
.fav-star { margin-left: auto; }
.ext { margin-left: 18px; }
.vsep { width: 1px; height: 18px; background: #7a5652; }
.s1 { margin-left: 16px; }
.acct { margin-left: 17px; }
.kebab { margin-left: 24px; }
.bookmarks { height: 35px; flex: none; display: flex; align-items: center; padding: 0 14px 6px 13px; border-bottom: 1px solid #5c4c48; color: #dcc3bf; letter-spacing: .45px; }
.s2 { margin: 0 15px 0 15px; }
.bm { margin-left: 6px; }
.s3 { margin: 0 16px 0 auto; }
.bm2 { margin-left: 8px; }

/* application */
.page { flex: 1; min-height: 0; display: flex; color: #3e2723; background: linear-gradient(to bottom right, #b8aa98, #f8ebdb 50%, #eddfd3); }
.sidebar { position: relative; width: 288px; flex: none; color: #fff; font-size: 14px; background: linear-gradient(160deg, #80695b, #8f7468 28%, #a3887c 60%, #b09a8c 78%, #baa599); }
.brand { height: 62px; display: flex; align-items: center; gap: 11px; padding: 1px 0 0 15px; font-size: 18px; letter-spacing: .45px; font-weight: 600; background: rgba(128,80,72,.22); }
.menu { padding: 18px 8px 0; display: flex; flex-direction: column; gap: 8px; }
.group { height: 20px; line-height: 20px; padding-left: 8px; font-weight: 600; margin-bottom: -1px; }
.other { margin-top: 10px; }
.item { height: 32px; width: 271px; border-radius: 6px; padding-left: 8px; display: flex; align-items: center; gap: 16px; color: rgba(255,255,255,.92); }
.item svg, .ic { width: 20px; height: 20px; fill: none; stroke: currentColor; stroke-width: 2; stroke-linecap: round; stroke-linejoin: round; }
.on { background: rgba(255,255,255,.16); font-weight: 500; box-shadow: 0 1px 2px rgba(0,0,0,.08); }
.plan { height: 40px; padding-left: 12px; gap: 8px; font-weight: 500; }
.sub { gap: 8px; }
.item .end { width: 16px; height: 16px; margin-left: auto; margin-right: 8px; }
.plan .end { margin-right: 16px; }
.devtool { position: absolute; left: 19px; bottom: 19px; border-radius: 50%; box-shadow: 0 6px 20px rgba(60,35,25,.18); }

.content { flex: 1; min-width: 0; display: flex; flex-direction: column; }
.head { height: 64px; flex: none; display: flex; align-items: center; padding: 0 17px 0 22px; color: #fff; background: linear-gradient(to right, #877164, #a28679 42%, #ac9486 65%, #bdaa9c); border-bottom: 1px solid rgba(255,255,255,.1); box-shadow: inset 1px 0 rgba(255,255,255,.08); }
.head .panel { width: 16px; height: 16px; }
.title { margin-left: 22px; font-size: 18px; font-weight: 600; }
.theme { margin-left: auto; width: 36px; height: 36px; border-radius: 7px; background: rgba(142,110,100,.34); display: flex; align-items: center; justify-content: center; }
.me { margin-left: 9px; width: 39px; height: 39px; border-radius: 20px; background: rgba(142,110,100,.4); font-size: 14px; font-weight: 600; display: flex; align-items: center; justify-content: center; }
.scroller { flex: 1; min-height: 0; display: flex; }
main { flex: 1; min-width: 0; padding: 24px 24px 0; overflow: hidden; }
.track { width: 10px; background: #c9ad92; padding: 13px 1px 0 2px; }
.track i { display: block; width: 6px; height: 448px; border-radius: 3px; background: #d4b491; }

.heading { display: flex; align-items: center; gap: 16px; height: 60px; }
.heading .ic { width: 32px; height: 32px; }
h1 { margin: 0; font-size: 30px; line-height: 36px; font-weight: 700; }
p { margin: 0; font-size: 16px; line-height: 24px; }
.card { border: 1px solid rgba(255,255,255,.24); border-radius: 8px; background: rgba(255,255,255,.1); }
.stats { margin-top: 32px; display: grid; grid-template-columns: repeat(4, 1fr); gap: 24px; }
.stat { height: 146px; padding: 24px; font-size: 16px; }
.row { height: 24px; display: flex; align-items: center; justify-content: space-between; }
.num { margin: 16px 0 8px; height: 32px; line-height: 32px; font-size: 24px; font-weight: 700; display: flex; align-items: center; gap: 8px; }
.num .ic { width: 16px; height: 16px; }
small { display: block; font-size: 12px; line-height: 16px; font-weight: 400; }
.green { color: #00c950; }
.red { color: #fb2c36; }
.blue { color: #2b7fff; }
.n-green { color: #05df72; }
.n-red { color: #ff6467; }
.n-blue { color: #51a2ff; }
.views { margin-top: 32px; display: flex; gap: 8px; }
.views span { height: 40px; line-height: 40px; padding: 0 16px; font-size: 16px; }
.soft { background: rgba(255,255,255,.15); border-radius: 8px; }
.filters { margin-top: 24px; height: 76px; padding: 16px; display: flex; gap: 16px; }
.search { flex: 1; display: flex; align-items: center; gap: 11px; padding: 0 11px; background: rgba(0,0,0,.2); border: 1px solid rgba(255,255,255,.1); border-radius: 8px; }
.search .ic { width: 16px; height: 16px; }
input { flex: 1; border: 0; background: none; outline: 0; font: 16px Inter, sans-serif; }
input::placeholder { color: #84756b; }
select { height: 42px; padding: 8px 16px; font: 16px Inter, sans-serif; color: #3e2723; background: rgba(0,0,0,.2); border: 1px solid rgba(255,255,255,.1); border-radius: 8px; }
.w-dates { width: 199px; }
.w-status { width: 126px; }
.w-batch { width: 256px; }
.records { margin-top: 24px; border-bottom: 0; }
.rechead { height: 85px; padding: 0 24px; display: flex; align-items: center; gap: 8px; border-bottom: 1px solid rgba(255,255,255,.1); }
h2 { margin: 0 auto 0 0; font-size: 20px; font-weight: 600; }
.btn { height: 36px; line-height: 36px; padding: 0 16px; font-size: 14px; }
.tr { display: grid; grid-template-columns: 141px 259px 321px 153px 152px 175px 182px 123px; align-items: center; border-bottom: 1px solid rgba(255,255,255,.1); font-size: 14px; line-height: 20px; padding: 16px 0; }
.tr > * { padding: 0 16px; }
.th { background: rgba(0,0,0,.2); font-size: 12px; line-height: 16px; font-weight: 500; letter-spacing: .6px; padding: 12px 0; }
.tr b { display: block; font-weight: 500; }
.who { display: flex; align-items: center; gap: 8px; }
.who i { width: 32px; height: 32px; border-radius: 16px; background: linear-gradient(90deg, #ad46ff, #f6339a); font-size: 12px; line-height: 32px; font-weight: 600; text-align: center; }
.mid { text-align: center; }
.badge { display: inline-flex; align-items: center; gap: 4px; height: 26px; padding: 0 8px; border: 1px solid; border-radius: 13px; font-size: 12px; font-weight: 500; vertical-align: middle; }
.badge .ic { width: 12px; height: 12px; }
.present { color: #7bf1a8; background: rgba(0,201,80,.2); border-color: rgba(0,201,80,.55); }
.late { color: #fbd52c; background: rgba(240,177,0,.22); border-color: rgba(240,177,0,.55); }
.absent { color: #ffa2a2; background: rgba(251,44,54,.2); border-color: rgba(251,44,54,.55); }
.part span { display: flex; justify-content: center; gap: 4px; margin-top: 4px; height: 16px; }
.part svg { width: 15px; height: 16px; }
.part .g { color: #05df72; }
.part .y { color: #fcc800; }
.dash { font-size: 16px; }
.act { display: flex; justify-content: center; padding-bottom: 6px; }
.act .ic { width: 20px; height: 20px; }
```
